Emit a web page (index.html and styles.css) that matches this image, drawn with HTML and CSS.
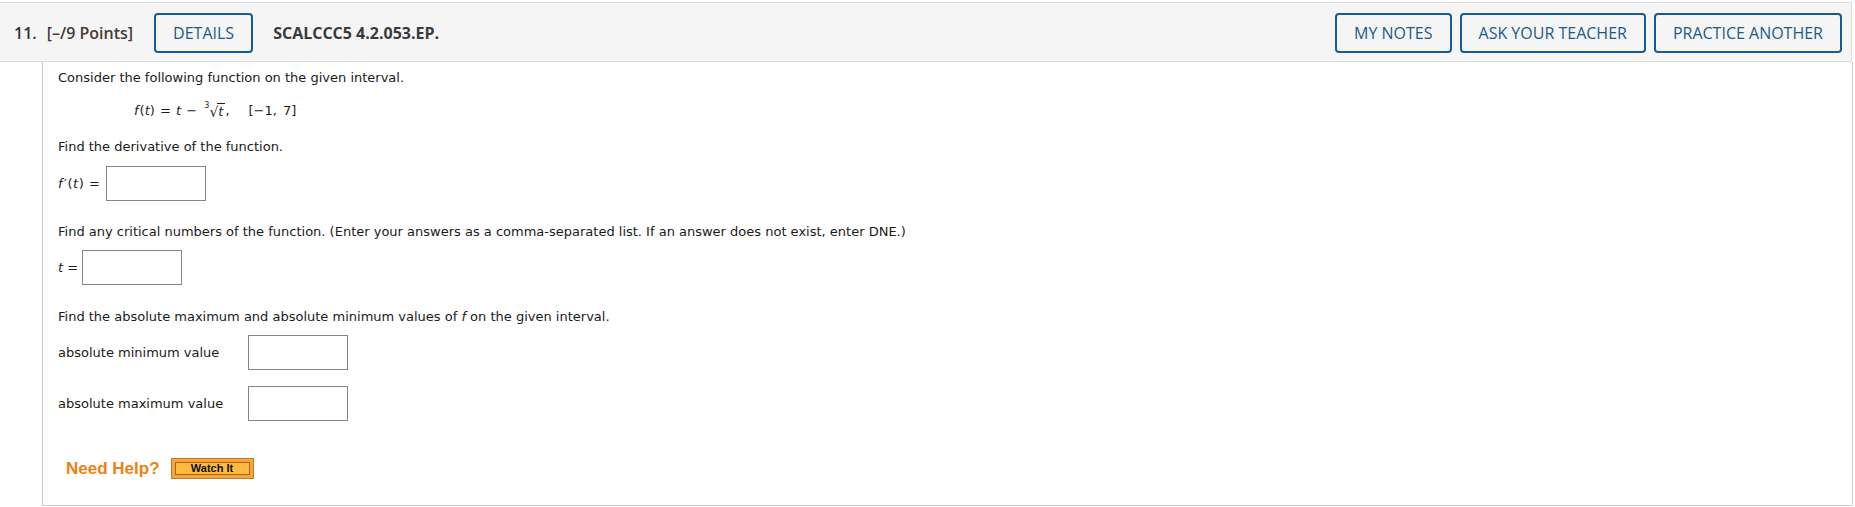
FILE: index.html
```html
<!DOCTYPE html>
<html lang="en">
<head>
<meta charset="utf-8">
<title>Question 11</title>
<link rel="stylesheet" href="styles.css">
</head>
<body>
<div class="question">
  <div class="qhead">
    <span class="qnum">11.</span>
    <span class="qpts">[–/9 Points]</span>
    <button class="qbtn details">DETAILS</button>
    <span class="qcode">SCALCCC5 4.2.053.EP.</span>
    <div class="qactions">
      <button class="qbtn">MY NOTES</button>
      <button class="qbtn">ASK YOUR TEACHER</button>
      <button class="qbtn">PRACTICE ANOTHER</button>
    </div>
  </div>
  <div class="qbody">
    <p class="txt first">Consider the following function on the given interval.</p>
    <p class="math"><i class="fn">f</i>(<i>t</i>)&nbsp;= <i>t</i> − <span class="root"><span class="idx">3</span><span class="rad">√</span><span class="rc"><i>t</i></span></span><span class="comma">,</span><span class="intv">[−1, 7]</span></p>
    <p class="txt gap20">Find the derivative of the function.</p>
    <div class="row r1"><span class="lbl fprime"><i class="fn">f</i>′(<i>t</i>) =</span><span class="box"></span></div>
    <p class="txt gap23">Find any critical numbers of the function. (Enter your answers as a comma-separated list. If an answer does not exist, enter DNE.)</p>
    <div class="row r2"><span class="lbl"><i>t</i> =</span><span class="box"></span></div>
    <p class="txt gap24">Find the absolute maximum and absolute minimum values of <i>f</i> on the given interval.</p>
    <div class="row r3"><span class="lbl wide">absolute minimum value</span><span class="box"></span></div>
    <div class="row r4"><span class="lbl wide">absolute maximum value</span><span class="box"></span></div>
    <div class="help">
      <span class="needhelp">Need Help?</span>
      <button class="watch"><span class="watch-in">Watch It</span></button>
    </div>
  </div>
</div>
</body>
</html>
```

FILE: styles.css
```css
html, body {
  margin: 0;
  padding: 0;
  background: #ffffff;
}
body {
  padding-top: 2px;
}
.question {
  width: 1853px;
}
.qhead {
  box-sizing: border-box;
  height: 60px;
  width: 1852px;
  background: #f5f5f5;
  border-top: 1px solid #dcdcdc;
  border-bottom: 1px solid #dcdcdc;
  border-right: 1px solid #dcdcdc;
  display: flex;
  align-items: center;
  padding: 1px 9px 0 14px;
  font-family: "Open Sans", "Noto Sans", sans-serif;
  font-size: 16px;
}
.qnum {
  font-weight: 600;
  color: #333333;
}
.qpts {
  font-weight: 600;
  color: #4a3a35;
  margin-left: 10px;
}
.qbtn {
  box-sizing: border-box;
  height: 40px;
  background: #f5f5f5;
  border: 2px solid #135e96;
  border-radius: 4px;
  color: #1b5a8a;
  font-family: "Open Sans", "Noto Sans", sans-serif;
  font-size: 16px;
  font-weight: 500;
  padding: 0 17px;
  line-height: 36px;
}
.details {
  margin-left: 21px;
}
.qcode {
  margin-left: 20px;
  font-weight: 700;
  color: #3a3a3a;
}
.qactions {
  margin-left: auto;
  display: flex;
  gap: 8px;
}
.qbody {
  box-sizing: border-box;
  margin-left: 42px;
  width: 1811px;
  height: 444px;
  border-left: 1px solid #cccccc;
  border-right: 1px solid #cccccc;
  border-bottom: 1px solid #cccccc;
  border-bottom-right-radius: 2px;
  padding: 8px 0 0 15px;
  font-family: "DejaVu Sans", Verdana, sans-serif;
  font-size: 13px;
  color: #1a1a1a;
}
.txt, .math {
  margin: 0;
  line-height: 16px;
}
.txt i, .math i, .lbl i {
  font-style: italic;
}
.fn {
  margin-right: 1px;
}
.math {
  margin-top: 17px;
  height: 16px;
  padding-left: 76px;
  white-space: nowrap;
  word-spacing: 1px;
}
.root {
  display: inline-block;
  line-height: 16px;
  height: 16px;
  vertical-align: top;
  margin-left: 2px;
}
.idx {
  display: inline-block;
  font-size: 8px;
  line-height: 8px;
  vertical-align: top;
  margin-top: -1px;
}
.rad {
  display: inline-block;
  font-size: 14px;
  line-height: 16px;
  vertical-align: top;
  margin-top: 1px;
}
.rc {
  display: inline-block;
  border-top: 1px solid #1a1a1a;
  line-height: 14px;
  margin-left: -1px;
  padding: 1px 2px 0 1px;
  vertical-align: top;
}
.intv {
  margin-left: 19px;
  word-spacing: 2px;
}
.gap20 { margin-top: 20px; }
.gap23 { margin-top: 23px; }
.gap24 { margin-top: 24px; }
.row {
  display: flex;
  align-items: center;
}
.r1 { margin-top: 11px; }
.r2 { margin-top: 10px; }
.r3 { margin-top: 10px; }
.r4 { margin-top: 16px; }
.lbl {
  margin-right: 4px;
  white-space: nowrap;
}
.lbl.fprime {
  margin-right: 6px;
  letter-spacing: 0.5px;
}
.lbl.wide {
  width: 190px;
  margin-right: 0;
}
.box {
  box-sizing: border-box;
  width: 100px;
  height: 35px;
  border: 1px solid #858585;
  background: #ffffff;
}
.help {
  margin-top: 37px;
  margin-left: 8px;
  display: flex;
  align-items: center;
  gap: 11px;
}
.needhelp {
  font-family: "Liberation Sans", Arial, sans-serif;
  font-weight: 700;
  font-size: 17px;
  color: #ee8110;
}
.watch {
  box-sizing: border-box;
  width: 83px;
  height: 21px;
  padding: 3px;
  border: 1px solid #c57a2e;
  background: #f7a43a;
  display: flex;
  cursor: pointer;
}
.watch-in {
  box-sizing: border-box;
  flex: 1;
  height: 13px;
  border: 1px solid #a5641f;
  background: #ffb940;
  font-family: "Liberation Sans", Arial, sans-serif;
  font-weight: 700;
  font-size: 11px;
  line-height: 11px;
  color: #111111;
  text-align: center;
}
```
